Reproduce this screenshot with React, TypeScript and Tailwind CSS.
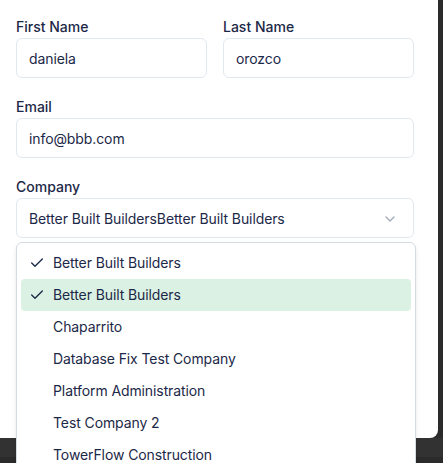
import React from "react";

const Check = () => (
  <svg width="16" height="16" viewBox="0 0 24 24" fill="none" stroke="currentColor" strokeWidth="2" strokeLinecap="round" strokeLinejoin="round">
    <path d="M20 6 9 17l-5-5" />
  </svg>
);

const ChevronDown = () => (
  <svg width="16" height="16" viewBox="0 0 24 24" fill="none" stroke="currentColor" strokeWidth="2" strokeLinecap="round" strokeLinejoin="round">
    <path d="m6 9 6 6 6-6" />
  </svg>
);

function Field({ label, value }: { label: string; value: string }) {
  return (
    <div className="flex flex-col gap-[1px]">
      <div className="h-[21px] pt-px text-sm leading-5 font-medium text-[#1c2847]">{label}</div>
      <div className="h-10 rounded-md border border-[#e2e8f0] bg-white px-3 pt-px flex items-center text-sm text-[#1c2847] tracking-[-0.1px]">
        {value}
      </div>
    </div>
  );
}

export default function App() {
  const items = [
    { t: "Better Built Builders", check: true, hl: false },
    { t: "Better Built Builders", check: true, hl: true },
    { t: "Chaparrito", check: false, hl: false },
    { t: "Database Fix Test Company", check: false, hl: false },
    { t: "Platform Administration", check: false, hl: false },
    { t: "Test Company 2", check: false, hl: false },
    { t: "TowerFlow Construction", check: false, hl: false },
  ];
  return (
    <div
      className="relative w-[443px] h-[463px] overflow-hidden bg-[#2b2b2b]"
      style={{ fontFamily: "Inter, 'Liberation Sans', sans-serif" }}
    >
      <div className="flex flex-col h-full">
        <div className="w-[438px] h-[438px] bg-white rounded-br-lg pl-4 pr-6 pt-4 flex flex-col gap-[18px]">
          <div className="grid grid-cols-2 gap-4">
            <Field label="First Name" value="daniela" />
            <Field label="Last Name" value="orozco" />
          </div>
          <Field label="Email" value="info@bbb.com" />
          <div className="flex flex-col gap-[1px]">
            <div className="h-[21px] pt-px text-sm leading-5 font-medium text-[#1c2847]">Company</div>
            <div className="h-10 rounded-md border border-[#e2e8f0] bg-white pl-3 pr-[15px] pt-px flex items-center justify-between text-sm text-[#1c2847] tracking-[-0.1px]">
              <span>Better Built BuildersBetter Built Builders</span>
              <span className="text-[#64748b] opacity-60">
                <ChevronDown />
              </span>
            </div>
          </div>
        </div>
        <div className="h-[19px] bg-[#323232]" />
        <div className="flex-1 bg-[#2b2b2b]" />
      </div>

      <div className="absolute left-4 top-[242px] w-[400px] rounded-md border border-[#d5dbe3] bg-white p-1 shadow-md">
        {items.map((it, i) => (
          <div
            key={i}
            className={`relative h-8 flex items-center pl-8 pr-2 rounded-sm text-sm text-[#1c2847] tracking-[-0.1px] ${
              it.hl ? "bg-[#dbf1e3]" : ""
            }`}
          >
            {it.check && (
              <span className="absolute left-2 top-0 h-8 flex items-center">
                <Check />
              </span>
            )}
            {it.t}
          </div>
        ))}
      </div>
    </div>
  );
}
